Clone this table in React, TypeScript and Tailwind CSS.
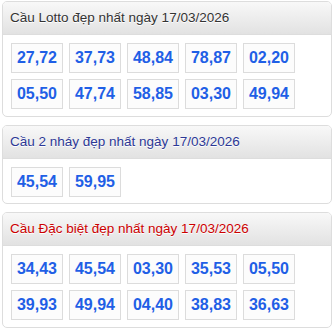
const lotto = ['27,72', '37,73', '48,84', '78,87', '02,20', '05,50', '47,74', '58,85', '03,30', '49,94'];
const nhay = ['45,54', '59,95'];
const dacBiet = ['34,43', '45,54', '03,30', '35,53', '05,50', '39,93', '49,94', '04,40', '38,83', '36,63'];

interface PanelProps {
  readonly title: string;
  readonly titleClass: string;
  readonly numbers: string[];
}

function Panel({ title, titleClass, numbers }: PanelProps) {
  return (
    <div className="rounded-[5px] border border-[#dddddd] bg-white overflow-hidden">
      <div className="h-[33px] flex items-center px-[7px] border-b border-[#dddddd] bg-gradient-to-b from-[#f8f8f8] to-[#e2e2e2]">
        <span className={`text-[13.5px] [text-shadow:0_1px_0_#fff] ${titleClass}`}>{title}</span>
      </div>
      <div className="flex flex-wrap gap-[6px] px-[8px] pt-[8px] pb-[7px]">
        {numbers.map((n, i) => (
          <div
            key={i}
            className="w-[52px] h-[30px] flex items-center justify-center border border-[#dcdcdc] bg-[#fcfcfc] text-[16px] font-bold text-[#1f5fe6]"
          >
            {n}
          </div>
        ))}
      </div>
    </div>
  );
}

export default function App() {
  return (
    <div className="w-[334px] h-[328px] bg-white px-[2px] pt-[1px] flex flex-col gap-[8px] font-['Liberation_Sans',Arial,sans-serif]">
      <Panel title="Cầu Lotto đẹp nhất ngày 17/03/2026" titleClass="text-[#333333]" numbers={lotto} />
      <Panel title="Cầu 2 nháy đẹp nhất ngày 17/03/2026" titleClass="text-[#2c3896]" numbers={nhay} />
      <Panel title="Cầu Đặc biệt đẹp nhất ngày 17/03/2026" titleClass="text-[#cc0000]" numbers={dacBiet} />
    </div>
  );
}
